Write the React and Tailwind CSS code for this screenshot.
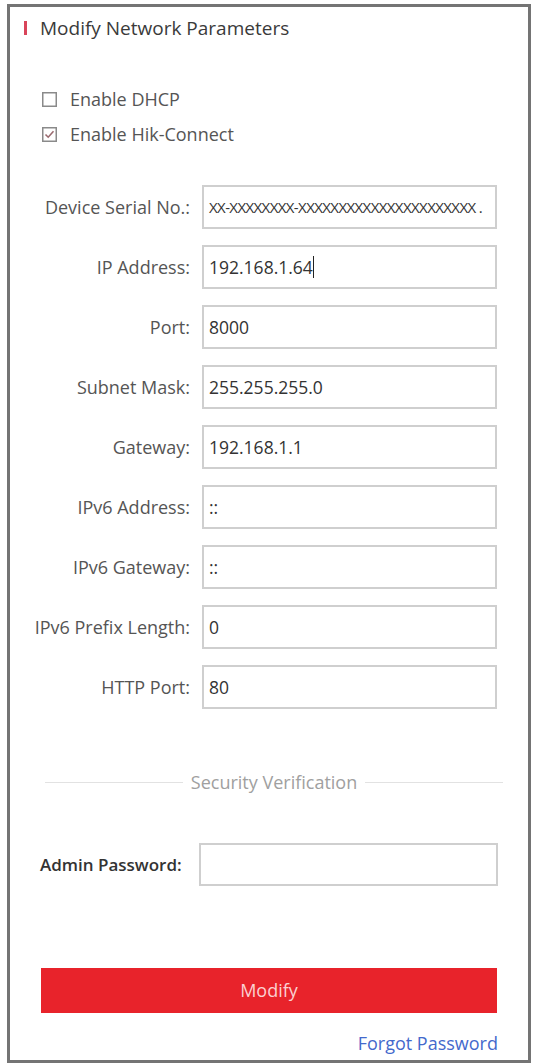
import React from 'react'

const fields = [
    { label: 'Device Serial No.:', value: 'XX-XXXXXXXX-XXXXXXXXXXXXXXXXXXXXXX .', serial: true },
    { label: 'IP Address:', value: '192.168.1.64', caret: true },
    { label: 'Port:', value: '8000' },
    { label: 'Subnet Mask:', value: '255.255.255.0' },
    { label: 'Gateway:', value: '192.168.1.1' },
    { label: 'IPv6 Address:', value: '::' },
    { label: 'IPv6 Gateway:', value: '::' },
    { label: 'IPv6 Prefix Length:', value: '0' },
    { label: 'HTTP Port:', value: '80' },
]

export default function App() {
    return (
        <div className="w-[534px] h-[1064px] bg-white pl-[7px] pt-[4px] font-['Open_Sans',_'Liberation_Sans',_sans-serif]">
            <div className="w-[524px] h-[1059px] border-[3px] border-[#747474] flex flex-col">
                <div className="flex items-center h-[24px] mt-[9px] pl-[14px]">
                    <div className="w-[3px] h-[14px] bg-[#d9455a]" />
                    <div className="ml-[13px] text-[19px] leading-[24px] text-[#3a3a3a]">Modify Network Parameters</div>
                </div>

                <div className="mt-[49px] pl-[32px] flex flex-col gap-[15px]">
                    <Checkbox label="Enable DHCP" />
                    <Checkbox label="Enable Hik-Connect" checked />
                </div>

                <div className="mt-[41px] flex flex-col gap-[16px]">
                    {fields.map((f) => (
                        <FieldRow key={f.label} {...f} />
                    ))}
                </div>

                <div className="mt-[61px] ml-[35px] mr-[25px] flex items-center">
                    <div className="flex-1 h-px bg-[#e2e2e2]" />
                    <div className="px-[8px] text-[18px] text-[#a0a0a0] leading-[24px]">Security Verification</div>
                    <div className="flex-1 h-px bg-[#e2e2e2]" />
                </div>

                <div className="mt-[49px] flex items-center pl-[30px] pr-[30px]">
                    <div className="w-[159px] text-[17px] font-semibold text-[#333] whitespace-nowrap">Admin Password:</div>
                    <div className="flex-1 h-[43px] border-2 border-[#cfcfcf]" />
                </div>

                <div className="mt-[82px] mx-[31px] h-[45px] bg-[#e8232b] flex items-center justify-center text-[18px] text-[#fbd0d2]">
                    Modify
                </div>

                <div className="mt-[19px] mr-[30px] text-right text-[18px] text-[#4469cc] leading-[22px]">Forgot Password</div>
            </div>
        </div>
    )
}

function Checkbox({ label, checked }) {
    return (
        <div className="flex items-center h-[20px]">
            <svg width="15" height="15" viewBox="0 0 15 15">
                <rect x="0.75" y="0.75" width="13.5" height="13.5" fill="white" stroke="#8a8a8a" strokeWidth="1.5" />
                {checked && (
                    <path d="M3.5 7.5 L6.2 10.2 L11.5 4.2" fill="none" stroke="#9a6a6f" strokeWidth="1.6" />
                )}
            </svg>
            <span className="ml-[13px] text-[18px] leading-[20px] text-[#555]">{label}</span>
        </div>
    )
}

function FieldRow({ label, value, caret, serial }) {
    return (
        <div className="flex items-center">
            <div className="w-[180px] text-right text-[18px] text-[#555] whitespace-nowrap">{label}</div>
            <div className="ml-[12px] w-[295px] h-[44px] border-2 border-[#cfcfcf] flex items-center px-[5px]">
                <span className={`${serial ? 'text-[15px] tracking-[-0.6px]' : 'text-[17.5px]'} text-[#333] whitespace-nowrap`}>
                    {value}
                </span>
                {caret && <span className="w-px h-[22px] bg-[#222]" />}
            </div>
        </div>
    )
}
